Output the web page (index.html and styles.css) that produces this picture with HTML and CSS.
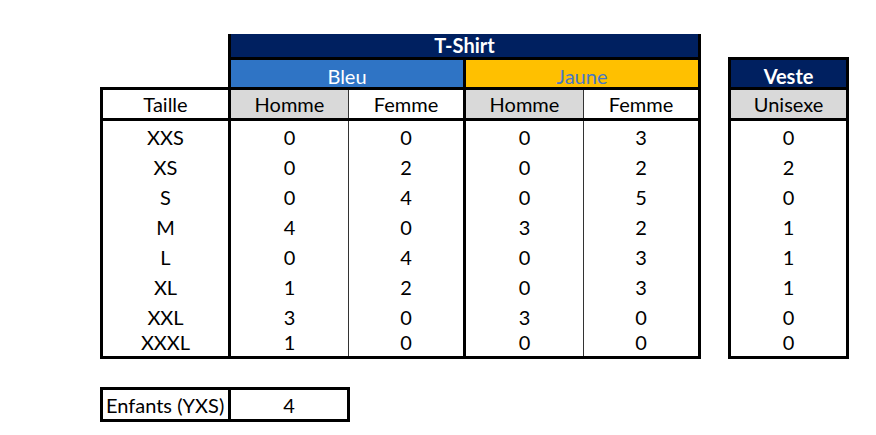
FILE: index.html
```html
<!DOCTYPE html>
<html lang="fr">
<head>
<meta charset="utf-8">
<title>Tailles</title>
<link rel="stylesheet" href="styles.css">
</head>
<body>
<div class="sheet">
  <div class="top">
    <table class="grid main">
      <colgroup>
        <col class="c-taille"><col class="c-h"><col class="c-f"><col class="c-h"><col class="c-f">
      </colgroup>
      <tr class="r-title">
        <td class="blank"></td>
        <td class="navy bold thick-l thick-r thick-b" colspan="4">T-Shirt</td>
      </tr>
      <tr class="r-color">
        <td class="blank"></td>
        <td class="blue thick-l thick-r thick-b" colspan="2">Bleu</td>
        <td class="yellow thick-l thick-r thick-b" colspan="2">Jaune</td>
      </tr>
      <tr class="r-head">
        <td class="thick-l thick-t thick-r thick-b">Taille</td>
        <td class="grey thick-l thick-b thin-r">Homme</td>
        <td class="thin-l thick-r thick-b">Femme</td>
        <td class="grey thick-l thick-b thin-r">Homme</td>
        <td class="thin-l thick-r thick-b">Femme</td>
      </tr>
      <tr class="r-data"><td class="thick-l thick-r">XXS</td><td class="thin-r">0</td><td class="thin-l thick-r">0</td><td class="thin-r">0</td><td class="thin-l thick-r">3</td></tr>
      <tr class="r-data"><td class="thick-l thick-r">XS</td><td class="thin-r">0</td><td class="thin-l thick-r">2</td><td class="thin-r">0</td><td class="thin-l thick-r">2</td></tr>
      <tr class="r-data"><td class="thick-l thick-r">S</td><td class="thin-r">0</td><td class="thin-l thick-r">4</td><td class="thin-r">0</td><td class="thin-l thick-r">5</td></tr>
      <tr class="r-data"><td class="thick-l thick-r">M</td><td class="thin-r">4</td><td class="thin-l thick-r">0</td><td class="thin-r">3</td><td class="thin-l thick-r">2</td></tr>
      <tr class="r-data"><td class="thick-l thick-r">L</td><td class="thin-r">0</td><td class="thin-l thick-r">4</td><td class="thin-r">0</td><td class="thin-l thick-r">3</td></tr>
      <tr class="r-data"><td class="thick-l thick-r">XL</td><td class="thin-r">1</td><td class="thin-l thick-r">2</td><td class="thin-r">0</td><td class="thin-l thick-r">3</td></tr>
      <tr class="r-data"><td class="thick-l thick-r">XXL</td><td class="thin-r">3</td><td class="thin-l thick-r">0</td><td class="thin-r">3</td><td class="thin-l thick-r">0</td></tr>
      <tr class="r-last"><td class="thick-l thick-r thick-b">XXXL</td><td class="thin-r thick-b">1</td><td class="thin-l thick-r thick-b">0</td><td class="thin-r thick-b">0</td><td class="thin-l thick-r thick-b">0</td></tr>
    </table>

    <table class="grid veste">
      <colgroup><col class="c-v"></colgroup>
      <tr class="r-color r-vtop"><td class="navy bold thick-l thick-r thick-t thick-b">Veste</td></tr>
      <tr class="r-head"><td class="grey thick-l thick-r thick-b">Unisexe</td></tr>
      <tr class="r-data"><td class="thick-l thick-r">0</td></tr>
      <tr class="r-data"><td class="thick-l thick-r">2</td></tr>
      <tr class="r-data"><td class="thick-l thick-r">0</td></tr>
      <tr class="r-data"><td class="thick-l thick-r">1</td></tr>
      <tr class="r-data"><td class="thick-l thick-r">1</td></tr>
      <tr class="r-data"><td class="thick-l thick-r">1</td></tr>
      <tr class="r-data"><td class="thick-l thick-r">0</td></tr>
      <tr class="r-last"><td class="thick-l thick-r thick-b">0</td></tr>
    </table>
  </div>

  <table class="grid kids">
    <colgroup><col class="c-k1"><col class="c-k2"></colgroup>
    <tr class="r-kids">
      <td class="label thick-l thick-t thick-b thick-r">Enfants (YXS)</td>
      <td class="thick-t thick-b thick-r">4</td>
    </tr>
  </table>
</div>
</body>
</html>
```

FILE: styles.css
```css
html, body {
  margin: 0;
  padding: 0;
  background: #ffffff;
}

.sheet {
  padding: 34px 0 0 100px;
  font-family: Lato, "Open Sans", sans-serif;
  font-size: 20px;
  color: #000;
}

.top {
  display: flex;
  align-items: flex-start;
  gap: 27px;
}

.grid {
  border-collapse: collapse;
  table-layout: fixed;
}

.grid td {
  padding: 0;
  text-align: center;
  vertical-align: bottom;
  line-height: 20px;
  white-space: nowrap;
  overflow: hidden;
}

.main { width: 601px; }
.c-taille { width: 128px; }
.c-h { width: 119px; }
.c-f { width: 116px; }

.veste { width: 118px; margin-top: 23px; }
.c-v { width: 118px; }

.kids { width: 247px; margin-top: 28px; }
.c-k1 { width: 128px; }
.c-k2 { width: 119px; }

.r-title td { height: 21px; padding-bottom: 2px; }
.r-color td { height: 26px; padding-bottom: 1px; }
.r-head td { height: 24px; padding-bottom: 4px; }
.r-data td { height: 26px; padding-bottom: 4px; }
.r-last td { height: 21px; padding-bottom: 4px; }
.r-kids td { height: 25px; padding-bottom: 4px; }

.thick-l { border-left: 3px solid #000; }
.thick-r { border-right: 3px solid #000; }
.thick-t { border-top: 3px solid #000; }
.thick-b { border-bottom: 3px solid #000; }
.thin-l { border-left: 1px solid #333; }
.thin-r { border-right: 1px solid #333; }

.navy { background: #002060; color: #ffffff; }
.blue { background: #2f74c5; color: #ffffff; }
.yellow { background: #ffc000; color: #4a78c2; }
.grey { background: #d9d9d9; }
.bold { font-weight: 700; }

.kids .label { text-align: left; padding-left: 3px; }
```
